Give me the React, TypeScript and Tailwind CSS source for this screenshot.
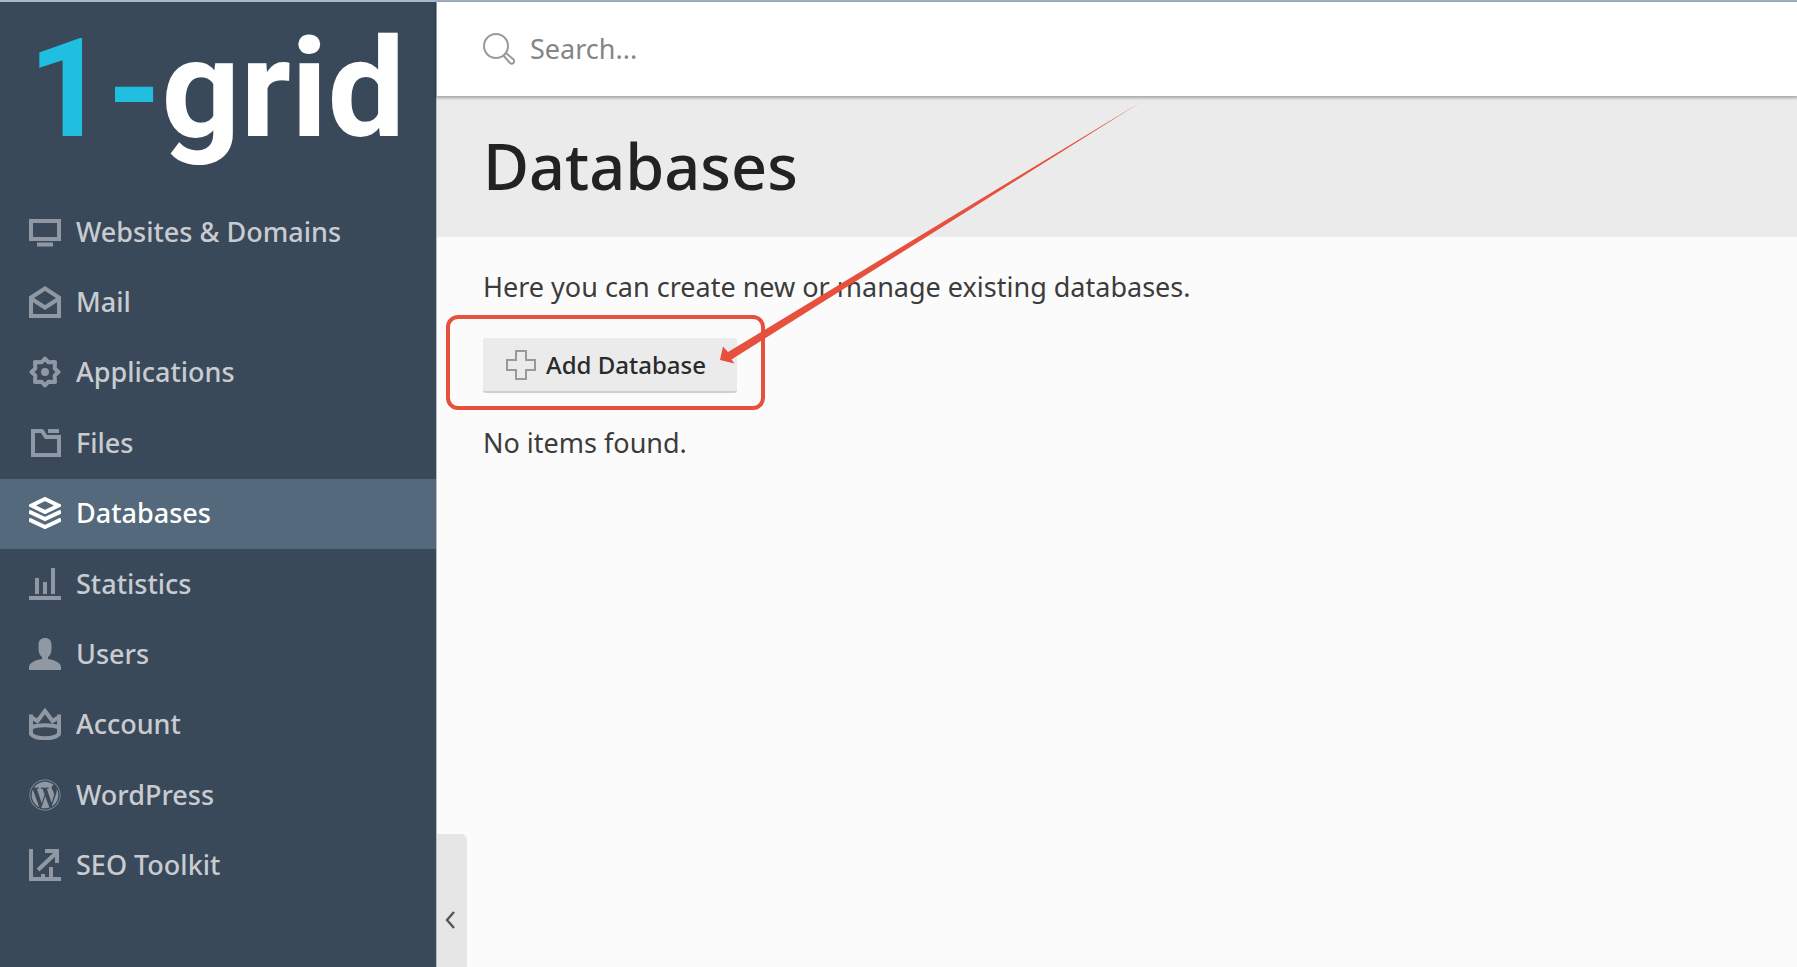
import type { ReactNode } from "react";
import { FaWordpress } from "react-icons/fa";
import clsx from "clsx";

function Icon({ children }: { children: ReactNode }) {
  return (
    <svg
      viewBox="0 0 32 32"
      className="size-8 shrink-0"
      fill="none"
      stroke="currentColor"
      strokeWidth="4"
      aria-hidden="true"
    >
      {children}
    </svg>
  );
}

const MonitorIcon = () => (
  <Icon>
    <rect x="2" y="5" width="28" height="18" />
    <path d="M8 28.5h16" />
  </Icon>
);

const MailIcon = () => (
  <Icon>
    <path d="M2 11.5 16 2.5l14 9V30H2z" />
    <path d="M2 12.5 16 21.5l14-9" />
  </Icon>
);

const GearIcon = () => (
  <Icon>
    <path
      d="M16 2.5 19.5 6.3 26 6 25.7 12.5 29.5 16 25.7 19.5 26 26 19.5 25.7 16 29.5 12.5 25.7 6 26 6.3 19.5 2.5 16 6.3 12.5 6 6 12.5 6.3z"
      strokeLinejoin="round"
    />
    <circle cx="16" cy="16" r="4" fill="currentColor" stroke="none" />
  </Icon>
);

const FolderIcon = () => (
  <Icon>
    <path d="M4 4h9l4 6h13v18H4z" />
    <path d="M19 4h11" />
  </Icon>
);

const LayersIcon = () => (
  <Icon>
    <path d="M16 2 29.5 8.5 16 15 2.5 8.5z" />
    <path d="M0 14.5 16 22l16-7.5M0 22.500 16 30l16-7.500" />
  </Icon>
);

const StatisticsIcon = () => (
  <Icon>
    <path d="M8 10v16M16 14v12M24 0v26M0 30h32" />
  </Icon>
);

const UserIcon = () => (
  <Icon>
    <path
      d="M16 0c4 0 6.500 2.500 6.500 7v4c0 4-1.500 6.500-3.500 8v2c7 1 13 4 13 8v3H0v-3c0-4 6-7 13-8v-2c-2-1.500-3.500-4-3.500-8V7C9.500 2.500 12 0 16 0z"
      fill="currentColor"
      stroke="none"
    />
  </Icon>
);

const CrownIcon = () => (
  <Icon>
    <path d="M2 6.500V26c2 2.500 8 4.200 14 4.200S28 28.500 30 26V6.500" />
    <path d="M1 8.500 8.500 13 16 3l7.500 10L31 8.500" />
    <path d="M2 19.500c6-3 22-3 28 0" />
  </Icon>
);

const WordPressIcon = () => <FaWordpress className="size-8 shrink-0" aria-hidden="true" />;

const SeoIcon = () => (
  <Icon>
    <path d="M2 0v30h30M14 30v-5M22 30V18M9 21 27 4" />
    <path d="M16 2h12v12" />
  </Icon>
);

const items = [
  { label: "Websites & Domains", icon: MonitorIcon },
  { label: "Mail", icon: MailIcon },
  { label: "Applications", icon: GearIcon },
  { label: "Files", icon: FolderIcon },
  { label: "Databases", icon: LayersIcon },
  { label: "Statistics", icon: StatisticsIcon },
  { label: "Users", icon: UserIcon },
  { label: "Account", icon: CrownIcon },
  { label: "WordPress", icon: WordPressIcon },
  { label: "SEO Toolkit", icon: SeoIcon },
];

function Sidebar() {
  return (
    <aside className="w-[436px] shrink-0 bg-[#394959]">
      <a
        href="#"
        className="flex h-[195px] items-start pl-7 font-[Roboto,sans-serif] text-[138px] leading-[174px] font-bold text-white"
      >
        <span className="text-[#20bfdf]">1-</span>grid
      </a>
      <nav>
        <ul className="grid min-h-176 auto-rows-fr">
          {items.map(({ label, icon: ItemIcon }) => {
            const active = label === "Databases";
            return (
              <li key={label} className="grid">
                <a
                  href="#"
                  aria-current={active ? "page" : undefined}
                  className={clsx(
                    "flex items-center gap-[15px] pb-px pl-[29px]",
                    active ? "bg-[#54697b] text-white" : "text-[#8f98a3]"
                  )}
                >
                  <ItemIcon />
                  <span className={clsx("font-medium", active ? "text-white" : "text-[#c8ccd1]")}>{label}</span>
                </a>
              </li>
            );
          })}
        </ul>
      </nav>
    </aside>
  );
}

function SearchBar() {
  return (
    <header className="relative flex h-[94px] items-center gap-[15px] bg-white pl-[46px] shadow-[0_1px_3px_1px_rgba(0,0,0,0.3)]">
      <svg viewBox="0 0 32 32" className="size-8 shrink-0" fill="none" stroke="#999" strokeWidth="2" aria-hidden="true">
        <circle cx="13" cy="13" r="12" />
        <path d="M20.500 22.500 27 30c2.500 2 5.500-1 3.500-3.500L23 20" />
      </svg>
      <input
        type="text"
        aria-label="Search"
        placeholder="Search..."
        className="min-w-0 flex-1 bg-transparent outline-none placeholder:text-[#858585]"
      />
    </header>
  );
}

function AddDatabase() {
  return (
    <div className="relative w-fit">
      <button
        type="button"
        className="flex h-[55px] items-center gap-2.5 rounded-[3px] border-b-2 border-[#cfcfcf] bg-[#ebebeb] pr-[31px] pl-[23px] text-[24px] font-medium text-[#2a2a2a]"
      >
        <svg viewBox="0 0 30 30" className="size-[30px]" fill="none" stroke="#999" strokeWidth="2" aria-hidden="true">
          <path d="M10 1h10v9h9v10h-9v9H10v-9H1V10h9z" />
        </svg>
        Add Database
      </button>

      {/* Callout */}
      <div className="pointer-events-none absolute -top-[23px] -right-7 -bottom-[17px] -left-[37px] rounded-xl border-4 border-[#e6503c]" />
      <svg
        viewBox="0 0 421 262"
        className="pointer-events-none absolute bottom-[29px] left-[237px] h-[262px] w-[421px] max-w-none"
        fill="#e6503c"
        aria-hidden="true"
      >
        <path d="M0 258 3 244.500 8 250 421 0 11.500 257.500 14.500 261.500z" />
      </svg>
    </div>
  );
}

export default function App() {
  return (
    <div className="flex min-h-screen border-t-2 border-[#a9b8cb] bg-[#fbfbfb] font-['Noto_Sans',sans-serif] text-[27px] leading-9 text-[#3c3c3c]">
      <Sidebar />
      <div className="relative min-w-0 flex-1 border-l border-[#b4bac1]">
        <SearchBar />
        <div className="bg-[#ebebeb] px-[46px] pt-[30px] pb-[31px]">
          <h1 className="text-[63px] leading-20 font-medium text-[#222]">Databases</h1>
        </div>
        <main className="px-[46px] pt-8">
          <p className="mb-[33px]">Here you can create new or manage existing databases.</p>
          <AddDatabase />
          <p className="mt-8">No items found.</p>
        </main>
        <button
          type="button"
          aria-label="Collapse sidebar"
          className="absolute bottom-0 left-0 flex h-[133px] w-[30px] items-end rounded-tr-md bg-[#e6e6e6] pb-[38px] pl-2"
        >
          <svg viewBox="0 0 10 18" className="h-[18px] w-2.5" fill="none" stroke="#555" strokeWidth="2.400" aria-hidden="true">
            <path d="M9 1 2 9l7 8" />
          </svg>
        </button>
      </div>
    </div>
  );
}
